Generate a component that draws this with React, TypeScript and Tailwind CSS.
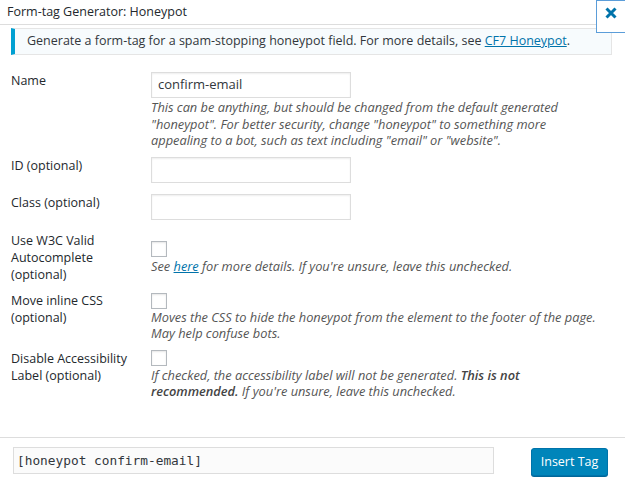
import React from "react";

const font = { fontFamily: '"Open Sans", "Noto Sans", sans-serif' };

function Label({ children }: { children: React.ReactNode }) {
  return (
    <div className="w-[151px] shrink-0 pl-[11px] text-[12.5px] leading-[17px] text-[#23282d]">
      {children}
    </div>
  );
}

function TextInput({ value = "" }: { value?: string }) {
  return (
    <div className="w-[200px] h-[26px] border border-[#dddddd] bg-white shadow-[inset_0_1px_2px_rgba(0,0,0,0.07)] px-[6px] flex items-center text-[13px] text-[#32373c]">
      {value}
    </div>
  );
}

function Check() {
  return (
    <div className="w-[16px] h-[16px] border border-[#b4b9be] bg-white shadow-[inset_0_1px_2px_rgba(0,0,0,0.1)]" />
  );
}

function Desc({ children }: { children: React.ReactNode }) {
  return (
    <p className="w-[446px] italic text-[12.8px] leading-[16.5px] text-[#555555]">
      {children}
    </p>
  );
}

export default function App() {
  return (
    <div className="w-[625px] h-[500px] bg-white relative overflow-hidden" style={font}>
      {/* Header */}
      <div className="h-[25px] border-b border-[#dddddd] flex items-center pl-[7px] text-[12.5px] text-[#23282d]">
        Form-tag Generator: Honeypot
      </div>
      <div className="absolute right-0 top-0 w-[29px] h-[33px] border border-[#5b9dd9] border-r-0 bg-white flex items-center justify-center">
        <svg width="14" height="14" viewBox="0 0 14 14" className="-mt-[8px]">
          <path d="M2.5 2.5 L11.5 11.5 M11.5 2.5 L2.5 11.5" stroke="#0073aa" strokeWidth="3" strokeLinecap="butt" />
        </svg>
      </div>

      {/* Notice */}
      <div className="mt-[3px] ml-[11px] mr-[13px] h-[27px] bg-[#f7fbfd] border border-[#e5e5e5] border-l-[4px] border-l-[#00a0d2] flex items-center pl-[12px] text-[12.5px] text-[#32373c]">
        <span>
          Generate a form-tag for a spam-stopping honeypot field. For more details, see{" "}
          <span className="text-[#0073aa] underline">CF7 Honeypot</span>.
        </span>
      </div>

      {/* Name */}
      <div className="flex mt-[17px]">
        <Label>Name</Label>
        <div className="flex-1">
          <TextInput value="confirm-email" />
          <div className="mt-[1px]">
            <Desc>
              This can be anything, but should be changed from the default generated "honeypot". For better security, change "honeypot" to something more appealing to a bot, such as text including "email" or "website".
            </Desc>
          </div>
        </div>
      </div>

      {/* ID */}
      <div className="flex mt-[8px]">
        <Label>ID (optional)</Label>
        <TextInput />
      </div>

      {/* Class */}
      <div className="flex mt-[11px]">
        <Label>Class (optional)</Label>
        <TextInput />
      </div>

      {/* W3C */}
      <div className="flex mt-[12px]">
        <Label>
          Use W3C Valid
          <br />
          Autocomplete
          <br />
          (optional)
        </Label>
        <div className="flex-1 pt-[9px]">
          <Check />
          <div className="mt-[1px]">
            <Desc>
              See <span className="text-[#0073aa] underline">here</span> for more details. If you're unsure, leave this unchecked.
            </Desc>
          </div>
        </div>
      </div>

      {/* Move */}
      <div className="flex mt-[9px]">
        <Label>
          Move inline CSS
          <br />
          (optional)
        </Label>
        <div className="flex-1 pt-[1px]">
          <Check />
          <Desc>
            Moves the CSS to hide the honeypot from the element to the footer of the page. May help confuse bots.
          </Desc>
        </div>
      </div>

      {/* Disable */}
      <div className="flex mt-[8px]">
        <Label>
          Disable Accessibility
          <br />
          Label (optional)
        </Label>
        <div className="flex-1">
          <Check />
          <div className="mt-[1px]">
            <Desc>
              If checked, the accessibility label will not be generated. <b className="font-semibold text-[#444444]">This is not</b>{" "}
              <b className="font-semibold text-[#444444]">recommended.</b> If you're unsure, leave this unchecked.
            </Desc>
          </div>
        </div>
      </div>

      {/* Footer */}
      <div className="absolute left-0 right-0 top-[437px] border-t border-[#dddddd] bg-white h-[63px]">
        <div className="flex items-start">
          <div className="ml-[13px] mt-[9px] w-[481px] h-[27px] border border-[#dddddd] bg-[#fbfbfb] flex items-center pl-[3px] text-[12.8px] text-[#32373c]" style={{ fontFamily: '"DejaVu Sans Mono", monospace' }}>
            [honeypot confirm-email]
          </div>
          <div className="ml-[37px] mt-[10px] w-[77px] h-[28px] rounded-[3px] bg-[#0085ba] border border-[#0073aa] shadow-[0_1px_0_#006799] flex items-center justify-center text-[12.5px] text-white">
            Insert Tag
          </div>
        </div>
      </div>
    </div>
  );
}
